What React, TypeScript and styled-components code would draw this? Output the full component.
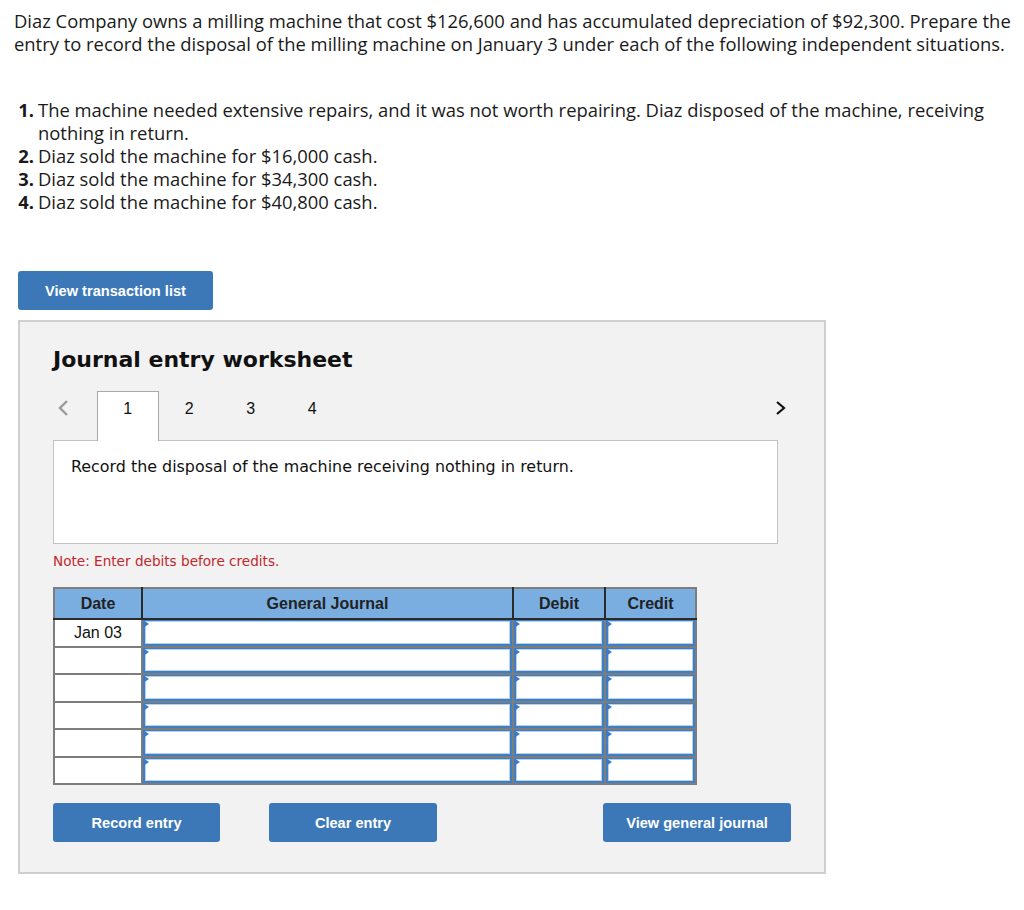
import React from "react";
import styled, { createGlobalStyle } from "styled-components";

const Global = createGlobalStyle`
  body { margin: 0; background: #fff; color: #1a1a1a; }
  * { box-sizing: border-box; }
`;

const Page = styled.div`
  padding: 9px 4px 0 14px;
  font-family: "Open Sans", "Liberation Sans", sans-serif;
  font-size: 18.4px;
  line-height: 23px;
  color: #1a1a1a;
`;

const Intro = styled.p`
  margin: 0;
`;

const List = styled.ol`
  list-style: none;
  margin: 43px 0 0 0;
  padding: 0 0 0 3px;
`;

const Item = styled.li`
  display: flex;
`;

const Num = styled.b`
  width: 21px;
  flex: none;
  text-align: right;
  padding-right: 4px;
  font-weight: 700;
`;

const BlueButton = styled.button<{ $w: number }>`
  width: ${(p) => p.$w}px;
  height: 39px;
  background: #3c78b8;
  color: #fff;
  border: none;
  border-radius: 3px;
  font-family: "Liberation Sans", Arial, sans-serif;
  font-weight: 700;
  font-size: 14.6px;
  padding: 0;
`;

const TopButtonRow = styled.div`
  margin: 58px 0 0 4px;
`;

const Panel = styled.section`
  margin: 10px 0 0 4px;
  width: 808px;
  background: #f2f2f2;
  border: 2px solid #cfcfcf;
  padding: 23px 0 30px 33px;
`;

const Heading = styled.h2`
  margin: 0;
  font-family: "DejaVu Sans", Verdana, sans-serif;
  font-weight: 700;
  font-size: 22px;
  line-height: 30px;
  color: #111;
`;

const TabRow = styled.div`
  margin-top: 16px;
  display: flex;
  align-items: flex-start;
  width: 735px;
  height: 49px;
`;

const Chevron = styled.span<{ $gray?: boolean }>`
  display: flex;
  width: 44px;
  height: 34px;
  align-items: center;
  justify-content: ${(p) => (p.$gray ? "flex-start" : "flex-end")};
  padding-left: ${(p) => (p.$gray ? "3px" : "0")};
  color: ${(p) => (p.$gray ? "#9a9a9a" : "#111")};
`;

const Tabs = styled.div`
  display: flex;
  flex: 1;
`;

const Tab = styled.div<{ $active?: boolean }>`
  width: 61.5px;
  height: 50px;
  padding-top: 8px;
  text-align: center;
  font-family: "Liberation Sans", Arial, sans-serif;
  font-size: 16px;
  line-height: 18px;
  color: #111;
  background: ${(p) => (p.$active ? "#fff" : "transparent")};
  border: 1px solid ${(p) => (p.$active ? "#a9a9a9" : "transparent")};
  border-bottom: none;
  position: relative;
  z-index: 1;
`;

const Prompt = styled.div`
  width: 725px;
  height: 104px;
  background: #fff;
  border: 1px solid #c3c3c3;
  padding: 16px 17px;
  font-family: "DejaVu Sans", Verdana, sans-serif;
  font-size: 15.9px;
  line-height: 20px;
  color: #111;
`;

const Note = styled.p`
  margin: 9px 0 0 0;
  color: #c1272d;
  font-family: "DejaVu Sans", Verdana, sans-serif;
  font-size: 13.6px;
  line-height: 17px;
`;

const Table = styled.table`
  margin-top: 17px;
  border-collapse: collapse;
  width: 642px;
  table-layout: fixed;
  font-family: "Liberation Sans", Arial, sans-serif;
  border: 2px solid #7d7d7d;
`;

const Th = styled.th<{ $w: number }>`
  width: ${(p) => p.$w}px;
  height: 31px;
  background: #7aaee1;
  color: #222;
  font-size: 16px;
  font-weight: 700;
  border-left: 2px solid #2a2a2a;
  border-bottom: 2px solid #2a2a2a;
  padding: 0;
  &:first-child { border-left: none; }
`;

const DateTd = styled.td`
  height: 27.5px;
  background: #fff;
  border: 2px solid #7d7d7d;
  border-left: none;
  text-align: center;
  font-size: 16px;
  color: #111;
  padding: 0;
`;

const InputTd = styled.td`
  height: 27.5px;
  padding: 0;
  border: 2px solid #7d7d7d;
  background: #fff;
  position: relative;
`;

const Field = styled.div`
  position: absolute;
  inset: 0;
  border: 2px solid #3f7fc4;
  border-top-width: 1px;
  box-shadow: inset 0 0 0 1px #b7d0ee;
`;

const Flag = styled.span`
  position: absolute;
  left: 0;
  top: 0;
  width: 0;
  height: 0;
  border-top: 4px solid transparent;
  border-bottom: 4px solid transparent;
  border-left: 6px solid #3a7bc8;
`;

const ActionRow = styled.div`
  margin-top: 18px;
  display: flex;
  align-items: center;
  width: 738px;
`;

const Spacer = styled.div<{ $w?: number }>`
  ${(p) => (p.$w ? `width: ${p.$w}px;` : "flex: 1;")}
`;

const items = [
  "The machine needed extensive repairs, and it was not worth repairing. Diaz disposed of the machine, receiving nothing in return.",
  "Diaz sold the machine for $16,000 cash.",
  "Diaz sold the machine for $34,300 cash.",
  "Diaz sold the machine for $40,800 cash.",
];

const Left = () => (
  <svg width="14" height="18" viewBox="0 0 14 18">
    <path d="M11 2 L4 9 L11 16" fill="none" stroke="currentColor" strokeWidth="2.4" />
  </svg>
);
const Right = () => (
  <svg width="14" height="18" viewBox="0 0 14 18">
    <path d="M3 3 L10 9 L3 15" fill="none" stroke="currentColor" strokeWidth="2.2" />
  </svg>
);

const InputCell = () => (
  <InputTd>
    <Field />
    <Flag />
  </InputTd>
);

export default function App() {
  return (
    <Page>
      <Global />
      <Intro>
        Diaz Company owns a milling machine that cost $126,600 and has accumulated depreciation of $92,300. Prepare
        the entry to record the disposal of the milling machine on January 3 under each of the following independent
        situations.
      </Intro>
      <List>
        {items.map((t, i) => (
          <Item key={i}>
            <Num>{i + 1}.</Num>
            <span>{t}</span>
          </Item>
        ))}
      </List>
      <TopButtonRow>
        <BlueButton $w={195}>View transaction list</BlueButton>
      </TopButtonRow>
      <Panel>
        <Heading>Journal entry worksheet</Heading>
        <TabRow>
          <Chevron $gray>
            <Left />
          </Chevron>
          <Tabs>
            {[1, 2, 3, 4].map((n) => (
              <Tab key={n} $active={n === 1}>
                {n}
              </Tab>
            ))}
          </Tabs>
          <Chevron>
            <Right />
          </Chevron>
        </TabRow>
        <Prompt>Record the disposal of the machine receiving nothing in return.</Prompt>
        <Note>Note: Enter debits before credits.</Note>
        <Table>
          <thead>
            <tr>
              <Th $w={88}>Date</Th>
              <Th $w={371}>General Journal</Th>
              <Th $w={92}>Debit</Th>
              <Th $w={91}>Credit</Th>
            </tr>
          </thead>
          <tbody>
            {[0, 1, 2, 3, 4, 5].map((r) => (
              <tr key={r}>
                <DateTd>{r === 0 ? "Jan 03" : ""}</DateTd>
                <InputCell />
                <InputCell />
                <InputCell />
              </tr>
            ))}
          </tbody>
        </Table>
        <ActionRow>
          <BlueButton $w={167}>Record entry</BlueButton>
          <Spacer $w={49} />
          <BlueButton $w={168}>Clear entry</BlueButton>
          <Spacer />
          <BlueButton $w={188}>View general journal</BlueButton>
        </ActionRow>
      </Panel>
    </Page>
  );
}
